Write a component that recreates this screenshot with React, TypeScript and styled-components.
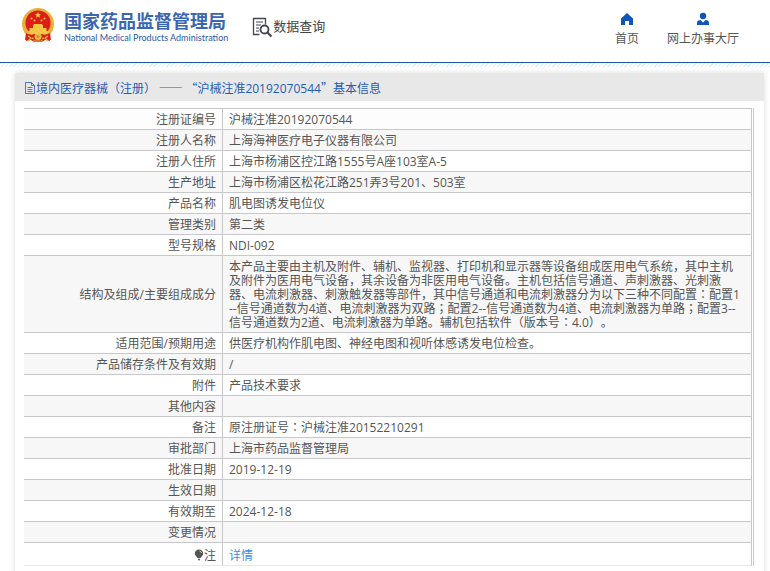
import React from "react";
import styled, { createGlobalStyle } from "styled-components";

const GlobalStyle = createGlobalStyle`
  * { box-sizing: border-box; }
  html, body { margin: 0; background: #fff; }
  body {
    overflow: hidden;
    color: #555;
    font: 12px/14px "Open Sans", "Noto Sans CJK SC", sans-serif;
    text-spacing-trim: space-all;
  }
  a { text-decoration: none; }
`;

const Page = styled.div`
  display: flex;
  flex-direction: column;
`;

const Header = styled.header`
  display: flex;
  height: 62px;
  padding: 0 31px 0 21px;
`;

const Brand = styled.a`
  display: flex;
  align-items: flex-start;
  gap: 9px;
  padding-top: 7px;
  color: #3b66b0;
`;

const BrandText = styled.span`
  display: flex;
  flex-direction: column;
  white-space: nowrap;
  padding-top: 2px;
`;

const BrandName = styled.strong`
  font: 700 18px/23px "Noto Sans CJK SC", sans-serif;
`;

const BrandEnglish = styled.span`
  color: #2b58a8;
  font: 400 9px/12px Lato, sans-serif;
`;

const Section = styled.div`
  display: flex;
  margin-left: 24px;
  padding-top: 17px;
  color: #444;
  font-size: 13px;
  line-height: 18px;
  white-space: nowrap;
`;

const Nav = styled.nav`
  display: flex;
  gap: 28px;
  margin-left: auto;
  padding-top: 12px;
`;

const NavLink = styled.a`
  display: flex;
  flex-direction: column;
  align-items: center;
  gap: 4px;
  color: #555;
  line-height: 18px;
  svg { fill: #1055b8; }
`;

const Rule = styled.div`
  height: 5px;
  border-top: 1px solid #1c5c9c;
  background: repeating-linear-gradient(135deg, #e0f0f8 0 1px, #fff 1px 3px);
`;

const Panel = styled.main`
  margin: 6px 6px 0 15px;
  padding-bottom: 20px;
  background: #fff;
  box-shadow: 0 0 6px #ddd;
`;

const Title = styled.h1`
  display: flex;
  align-items: center;
  gap: 1px;
  height: 28px;
  margin: 0;
  padding: 2px 0 0 10px;
  background: #e8e8e8;
  color: #1e5cb8;
  font: 400 12px/18px "Noto Sans CJK SC", sans-serif;
  white-space: pre;
`;

const Digits = styled.span`
  font-family: "Open Sans", sans-serif;
`;

const CenteredMark = styled.span`
  font-family: "Noto Sans CJK JP", sans-serif;
  line-height: 0;
`;

const TableFrame = styled.div`
  margin: 7px 10px 0 9px;
  border-right: 1px solid #c8c8cc;
  padding-right: 1px;
`;

const Table = styled.table`
  width: 100%;
  border-collapse: separate;
  border-spacing: 0;
  border-top: 1px solid #c8c8cc;
  border-right: 1px solid #c8c8cc;
  table-layout: fixed;
`;

const LabelColumn = styled.col`
  width: 199px;
`;

const Row = styled.tr`
  background: #fff;
  &:first-child { background: #fdfdfd; }
  &:nth-child(even) { background: #f7f7f7; }
  &:last-child > * {
    padding-top: 6px;
    padding-bottom: 2px;
    border-bottom-color: #e8e8e8;
  }
`;

const Label = styled.th`
  height: 21px;
  padding: 4px 6px 2px;
  border-right: 1px solid #c8c8cc;
  border-bottom: 1px solid #c8c8cc;
  font-weight: 400;
  text-align: right;
  svg { vertical-align: -1px; }
`;

const Value = styled.td`
  padding: 4px 6px 2px;
  border-bottom: 1px solid #c8c8cc;
`;

const DetailLink = styled.a`
  color: #3b8fdc;
`;

const Emblem = () => (
  <svg width="34" height="36" viewBox="0 0 34 36" aria-hidden="true">
    <path d="M6 27 5 34l5-1 3 2h8l3-2 5 1-1-7z" fill="#d7201c" />
    <circle cx="17" cy="17" r="16" fill="#e9b43b" />
    <circle cx="17" cy="17" r="14.4" fill="none" stroke="#dc9f33" strokeWidth="1" strokeDasharray="1 2" />
    <circle cx="17" cy="16" r="12.6" fill="#dc1d18" />
    <path d="m17 5 .8 2.1 2.2.1-1.7 1.4.6 2.2-1.9-1.3-1.9 1.3.6-2.2L14 7.200l2.200-.1z" fill="#f8d34a" />
    <g fill="#f4c744">
      <circle cx="10.500" cy="11.500" r="1" />
      <circle cx="13.500" cy="13.500" r="1" />
      <circle cx="20.500" cy="13.500" r="1" />
      <circle cx="23.500" cy="11.500" r="1" />
      <path d="M12 18.500 13 17h8l1 1.500zM12 18.500h10v2.500H12zM8.500 21h17v3h-17zM6.500 24h21l-2 3h-17z" />
    </g>
    <path d="M5 26c4 3 20 3 24 0l1 7-6-1-2-2-2 4h-6l-2-4-2 2-6 1z" fill="#d7201c" />
    <circle cx="17" cy="29.500" r="3.500" fill="#efbd40" />
    <circle cx="17" cy="29.500" r="1.500" fill="#d88b24" />
    <path d="m7 29 3 2-3 3m20-5-3 2 3 3M12 34h10" fill="none" stroke="#efbd40" strokeWidth="1.200" />
  </svg>
);

const SearchDocument = () => (
  <svg width="21" height="21" viewBox="0 0 21 21" fill="none" stroke="#444452" aria-hidden="true">
    <path d="M7.500 17.500h-6v-16h12v6" strokeWidth="1.300" />
    <path d="M4 5h7M4 8h5M4 11h3M4 14h3" strokeWidth="1.200" />
    <circle cx="12.500" cy="12.500" r="4" strokeWidth="1.800" />
    <path d="m15.500 15.500 4 4" strokeWidth="2.200" />
  </svg>
);

const Home = () => (
  <svg width="14" height="14" viewBox="0 0 14 14" aria-hidden="true">
    <path d="M7 1 1 6.500V13h4V9h4v4h4V6.500z" />
  </svg>
);

const Person = () => (
  <svg width="14" height="14" viewBox="0 0 14 14" aria-hidden="true">
    <circle cx="7" cy="4" r="3.200" />
    <path d="M1 13v-2c0-2 1.500-3 3.500-3L7 10.500 9.500 8c2 0 3.500 1 3.500 3v2z" />
  </svg>
);

const DocumentIcon = () => (
  <svg width="10" height="12" viewBox="0 0 10 12" fill="none" stroke="#1e5cb8" aria-hidden="true">
    <path d="M.5.500h6l3 3v8h-9zM6.500.500v3h3M2.500 5.500h5M2.500 7.500h5M2.500 9.500h5" strokeWidth=".8" />
  </svg>
);

const Bulb = () => (
  <svg width="10" height="12" viewBox="0 0 10 12" aria-hidden="true">
    <path d="M5 .5C2.500.5.800 2.200.800 4.500S3 7.500 3.500 9h3C7 7.500 9.200 6.800 9.200 4.500S7.500.5 5 .5zM3.700 9.700h2.600L5.500 11.500h-1z" fill="#555" />
    <path d="M5.500 2c1 .2 1.800 1 2 2" fill="none" stroke="#ddd" strokeWidth=".9" />
  </svg>
);

const Colon = () => <CenteredMark lang="ja">：</CenteredMark>;
const Semicolon = () => <CenteredMark lang="ja">；</CenteredMark>;

const rows: [React.ReactNode, React.ReactNode][] = [
  ["注册证编号", "沪械注准20192070544"],
  ["注册人名称", "上海海神医疗电子仪器有限公司"],
  ["注册人住所", "上海市杨浦区控江路1555号A座103室A-5"],
  ["生产地址", "上海市杨浦区松花江路251弄3号201、503室"],
  ["产品名称", "肌电图诱发电位仪"],
  ["管理类别", "第二类"],
  ["型号规格", "NDI-092"],
  [
    "结构及组成/主要组成成分",
    <>
      本产品主要由主机及附件、辅机、监视器、打印机和显示器等设备组成医用电气系统，其中主机<br />
      及附件为医用电气设备，其余设备为非医用电气设备。主机包括信号通道、声刺激器、光刺激<br />
      器、电流刺激器、刺激触发器等部件，其中信号通道和电流刺激器分为以下三种不同配置<Colon />配置1<br />
      --信号通道数为4道、电流刺激器为双路<Semicolon />配置2--信号通道数为4道、电流刺激器为单路<Semicolon />配置3--<br />
      信号通道数为2道、电流刺激器为单路。辅机包括软件（版本号<Colon />4.0）。
    </>,
  ],
  ["适用范围/预期用途", "供医疗机构作肌电图、神经电图和视听体感诱发电位检查。"],
  ["产品储存条件及有效期", "/"],
  ["附件", "产品技术要求"],
  ["其他内容", ""],
  ["备注", <>原注册证号<Colon />沪械注准20152210291</>],
  ["审批部门", "上海市药品监督管理局"],
  ["批准日期", "2019-12-19"],
  ["生效日期", ""],
  ["有效期至", "2024-12-18"],
  ["变更情况", ""],
  [<><Bulb />注</>, <DetailLink href="#detail">详情</DetailLink>],
];

export default function App() {
  return (
    <Page lang="zh-CN">
      <GlobalStyle />
      <Header>
        <Brand href="#top">
          <Emblem />
          <BrandText>
            <BrandName>国家药品监督管理局</BrandName>
            <BrandEnglish>National Medical Products Administration</BrandEnglish>
          </BrandText>
        </Brand>
        <Section><SearchDocument />数据查询</Section>
        <Nav>
          <NavLink href="#home"><Home />首页</NavLink>
          <NavLink href="#services"><Person />网上办事大厅</NavLink>
        </Nav>
      </Header>
      <Rule />
      <Panel>
        <Title>
          <DocumentIcon />
          <span>境内医疗器械（注册） —— “沪械注准<Digits>20192070544</Digits>”基本信息</span>
        </Title>
        <TableFrame>
          <Table>
            <colgroup><LabelColumn /><col /></colgroup>
            <tbody>
              {rows.map(([label, value], i) => (
                <Row key={i}>
                  <Label scope="row">{label}</Label>
                  <Value>{value}</Value>
                </Row>
              ))}
            </tbody>
          </Table>
        </TableFrame>
      </Panel>
    </Page>
  );
}
